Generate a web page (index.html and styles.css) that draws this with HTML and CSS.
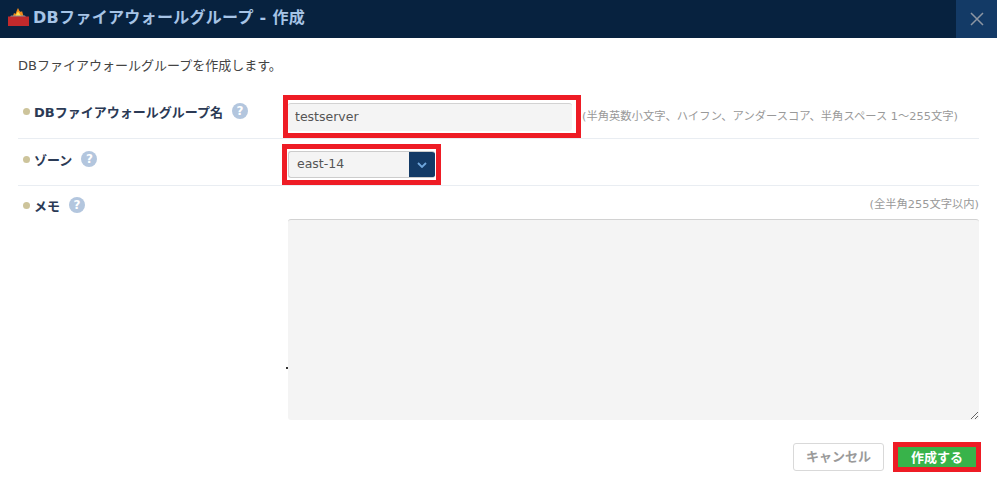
FILE: index.html
```html
<!DOCTYPE html>
<html lang="ja">
<head>
<meta charset="utf-8">
<title>DBファイアウォールグループ - 作成</title>
<link rel="stylesheet" href="styles.css">
</head>
<body>
<header class="head">
  <svg class="logo" width="21" height="18" viewBox="0 0 21 18">
    <path d="M5 8 L6 5 L7.500 6 L9 2 L10 0 L11.500 3 L13 4 L14 3 L15.500 8 Z" fill="#f08a1c"/>
    <path d="M7.500 8 L9 5 L10 3.500 L11.500 5.500 L13 8 Z" fill="#ffe14d"/>
    <path d="M3 7.500 H17 L18 9 H2 Z" fill="#8a8f98"/>
    <rect x="0" y="8.500" width="21" height="9.500" fill="#c22a2c"/>
  </svg>
  <h1 class="title">DBファイアウォールグループ - 作成</h1>
  <button class="close" aria-label="閉じる">
    <svg width="14" height="14" viewBox="0 0 14 14"><path d="M1 1 L13 13 M13 1 L1 13" stroke="#8d96a3" stroke-width="1.500" fill="none"/></svg>
  </button>
</header>
<main class="body">
  <p class="lead">DBファイアウォールグループを作成します。</p>
  <div class="row row-name">
    <div class="label"><span class="dot"></span><b>DBファイアウォールグループ名</b><span class="help">?</span></div>
    <div class="field">
      <div class="marked">
        <input class="input" value="testserver">
        <span class="mark mark-input"></span>
      </div>
      <span class="hint">(半角英数小文字、ハイフン、アンダースコア、半角スペース 1～255文字)</span>
    </div>
  </div>
  <div class="row row-zone">
    <div class="label"><span class="dot"></span><b>ゾーン</b><span class="help">?</span></div>
    <div class="field">
      <div class="marked">
        <div class="select">
          <span class="select-value">east-14</span>
          <span class="select-btn"><svg width="10" height="6" viewBox="0 0 10 6"><path d="M1 1 L5 5 L9 1" stroke="#6fa6dc" stroke-width="1.800" fill="none"/></svg></span>
        </div>
        <span class="mark mark-select"></span>
      </div>
    </div>
  </div>
  <div class="row-memo">
    <div class="label"><span class="dot"></span><b>メモ</b><span class="help">?</span></div>
    <div class="memo-field">
      <span class="hint hint-memo">(全半角255文字以内)</span>
      <textarea class="textarea"></textarea>
      <span class="speck"></span>
    </div>
  </div>
  <div class="actions">
    <button class="btn-cancel">キャンセル</button>
    <div class="marked">
      <button class="btn-create">作成する</button>
      <span class="mark mark-create"></span>
    </div>
  </div>
</main>
</body>
</html>
```
FILE: styles.css
```css
* { box-sizing: border-box; }
html, body { margin: 0; padding: 0; }
body {
  width: 997px;
  height: 482px;
  overflow: hidden;
  background: #fff;
  color: #333;
  font-family: "DejaVu Sans", "Noto Sans CJK JP", sans-serif;
  font-size: 12px;
}
.head {
  height: 38px;
  background: #07223f;
  display: flex;
  align-items: center;
  padding-left: 8px;
}
.logo { margin-top: -4px; margin-right: 4px; flex: none; }
.title {
  margin: -7px 0 0;
  flex: 1;
  font-size: 16px;
  font-weight: 700;
  color: #a6c4e6;
  letter-spacing: 0.3px;
}
.close {
  width: 41px;
  height: 38px;
  border: 0;
  padding: 0;
  background: #133a66;
  display: flex;
  align-items: center;
  justify-content: center;
}
.body { padding: 0 18px; }
.lead {
  margin: 0;
  padding-top: 19px;
  height: 58px;
  line-height: 18px;
  font-size: 13px;
  color: #444;
}
.row {
  display: flex;
  border-bottom: 1px solid #e9edf2;
}
.row-name { height: 43px; }
.row-zone { height: 47px; }
.label {
  width: 270px;
  flex: none;
  display: flex;
  align-items: center;
  height: 20px;
  padding-left: 5px;
  margin-top: 5px;
  color: #2b3a55;
  font-size: 13px;
}
.row-zone .label { margin-top: 10px; }
.label b { font-weight: 700; }
.dot {
  width: 7px;
  height: 7px;
  border-radius: 50%;
  background: #cdc49b;
  margin-right: 4px;
  flex: none;
}
.help {
  width: 16px;
  height: 16px;
  border-radius: 50%;
  background: #b3c6de;
  color: #fff;
  font-size: 12px;
  font-weight: 700;
  line-height: 16px;
  text-align: center;
  margin-left: 9px;
  flex: none;
}
.field {
  display: flex;
  align-items: flex-start;
}
.marked { position: relative; flex: none; }
.mark {
  position: absolute;
  border: 5px solid #ee1c25;
  pointer-events: none;
}
.mark-input { left: -5px; top: -1px; width: 298px; height: 43px; }
.mark-select { left: -6px; top: -7px; width: 159px; height: 41px; }
.mark-create { left: -5px; top: -5px; width: 88px; height: 30px; }
.input {
  display: block;
  width: 284px;
  height: 28px;
  margin-top: 7px;
  border: 0;
  border-top: 1px solid #d2d2d2;
  border-radius: 3px;
  background: #f4f4f4;
  padding: 0 7px 2px;
  font: inherit;
  font-size: 12.500px;
  color: #555;
}
.row-zone .marked { margin-top: 12px; }
.hint {
  margin-left: 10px;
  margin-top: 13px;
  font-size: 11.300px;
  line-height: 16px;
  color: #999;
  white-space: nowrap;
}
.select {
  width: 147px;
  height: 27px;
  display: flex;
  border: 1px solid #ccc;
  border-right: 0;
  border-radius: 3px;
  background: #f4f4f4;
  overflow: hidden;
}
.select-value {
  flex: 1;
  padding-left: 8px;
  line-height: 24px;
  font-size: 12.500px;
  color: #555;
}
.select-btn {
  width: 26px;
  background: #133a66;
  display: flex;
  align-items: center;
  justify-content: center;
}
.row-memo { display: flex; height: 257px; }
.row-memo .label { margin-top: 9px; }
.memo-field {
  position: relative;
  flex: 1;
  display: flex;
  flex-direction: column;
  align-items: flex-end;
}
.hint-memo { margin: 11px 0 0 0; height: 22px; line-height: 16px; }
.textarea {
  display: block;
  width: 691px;
  height: 201px;
  border: 0;
  border-top: 1px solid #d2d2d2;
  border-radius: 3px;
  background: #f4f4f4;
  resize: both;
  margin: 0;
}
.speck {
  position: absolute;
  left: -2px;
  top: 181px;
  width: 2px;
  height: 2px;
  background: #333;
}
.actions {
  display: flex;
  justify-content: flex-end;
  align-items: center;
  gap: 14px;
  padding-right: 3px;
}
.btn-cancel {
  width: 91px;
  height: 28px;
  border: 1px solid #d9d9d9;
  border-radius: 3px;
  background: #fff;
  color: #9a9a9a;
  font: inherit;
  font-size: 13px;
  font-weight: 700;
  padding: 0 0 3px;
}
.btn-create {
  display: block;
  width: 78px;
  height: 20px;
  border: 0;
  background: #38b34a;
  color: #fff;
  font: inherit;
  font-size: 13px;
  font-weight: 700;
  padding: 0 0 3px;
}
```
